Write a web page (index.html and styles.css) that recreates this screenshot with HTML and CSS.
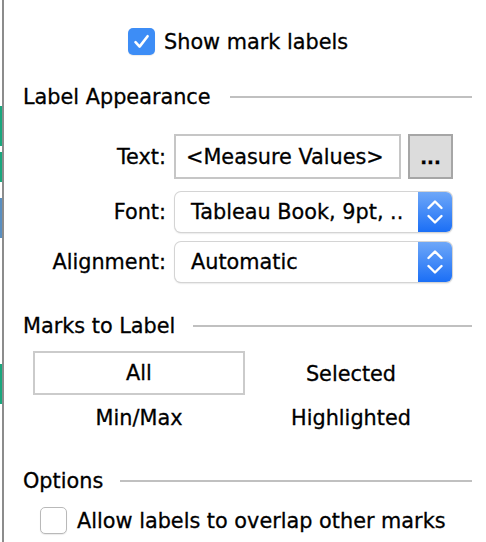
FILE: index.html
```html
<!DOCTYPE html>
<html>
<head>
<meta charset="utf-8">
<link rel="stylesheet" href="styles.css">
</head>
<body>
<div class="page">
  <div class="edge">
    <div class="marks">
      <div class="mk green m1"></div>
      <div class="mk green m2"></div>
      <div class="mk blue m3"></div>
      <div class="mk green m4"></div>
    </div>
    <div class="rule"></div>
  </div>
  <div class="panel">
    <div class="show-row">
      <span class="cb checked">
        <svg width="27" height="27" viewBox="0 0 27 27"><path d="M7.5 14.2 L11.6 18.6 L19.6 8.2" fill="none" stroke="#fff" stroke-width="2.6" stroke-linecap="round" stroke-linejoin="round"/></svg>
      </span>
      <span class="show-text">Show mark labels</span>
    </div>

    <div class="heading h1"><span>Label Appearance</span><div class="line"></div></div>

    <div class="form">
      <div class="row r1">
        <div class="lbl">Text:</div>
        <div class="textbox">&lt;Measure Values&gt;</div>
        <div class="dots">...</div>
      </div>
      <div class="row r2">
        <div class="lbl">Font:</div>
        <div class="select"><span class="sel-text">Tableau Book, 9pt, ..</span>
          <span class="stepper"><svg width="20" height="30" viewBox="0 0 20 30"><path d="M3.5 11 L10 4.5 L16.5 11 M3.5 19 L10 25.5 L16.5 19" fill="none" stroke="#fff" stroke-width="2.4" stroke-linecap="round" stroke-linejoin="round"/></svg></span>
        </div>
      </div>
      <div class="row r3">
        <div class="lbl">Alignment:</div>
        <div class="select"><span class="sel-text">Automatic</span>
          <span class="stepper"><svg width="20" height="30" viewBox="0 0 20 30"><path d="M3.5 11 L10 4.5 L16.5 11 M3.5 19 L10 25.5 L16.5 19" fill="none" stroke="#fff" stroke-width="2.4" stroke-linecap="round" stroke-linejoin="round"/></svg></span>
        </div>
      </div>
    </div>

    <div class="heading h2"><span>Marks to Label</span><div class="line"></div></div>

    <div class="choices">
      <div class="choice sel">All</div>
      <div class="choice">Selected</div>
      <div class="choice">Min/Max</div>
      <div class="choice">Highlighted</div>
    </div>

    <div class="heading h3"><span>Options</span><div class="line"></div></div>

    <div class="opt-row">
      <span class="cb"></span>
      <span class="opt-text">Allow labels to overlap other marks</span>
    </div>
  </div>
</div>
</body>
</html>
```

FILE: styles.css
```css
html, body {
  margin: 0;
  padding: 0;
  background: #fff;
}
body {
  font-family: "DejaVu Sans", Verdana, sans-serif;
  font-size: 20.8px;
  color: #000;
  -webkit-text-stroke: 0.3px #000;
}
.page {
  width: 486px;
  height: 542px;
  overflow: hidden;
  display: flex;
}
.edge {
  width: 4px;
  display: flex;
  flex-shrink: 0;
}
.marks {
  width: 2px;
  display: flex;
  flex-direction: column;
}
.mk { width: 2px; }
.green { background: #1aa77d; }
.blue { background: #5a8fc0; }
.m1 { margin-top: 106px; height: 40px; }
.m2 { margin-top: 6px; height: 30px; }
.m3 { margin-top: 16px; height: 40px; }
.m4 { margin-top: 126px; height: 40px; }
.rule {
  width: 2px;
  background: #8c8c8c;
}
.panel {
  flex: 1;
  display: flex;
  flex-direction: column;
}
.show-row {
  margin-top: 28px;
  height: 27px;
  display: flex;
  align-items: center;
  padding-left: 124px;
  gap: 9px;
}
.cb {
  width: 27px;
  height: 27px;
  box-sizing: border-box;
  border-radius: 5px;
  display: inline-block;
  flex-shrink: 0;
  border: 1.5px solid #b9b9b9;
  background: #fff;
  box-shadow: 0 1px 1px rgba(0,0,0,0.08);
}
.cb.checked {
  border: none;
  background: #3d8df6;
}
.cb svg { display: block; }
.heading {
  display: flex;
  align-items: center;
  padding-left: 19px;
  padding-right: 14px;
  height: 24px;
}
.heading .line {
  flex: 1;
  height: 2px;
  background: #c0c0c0;
  margin-left: 19px;
}
.h1 { margin-top: 30px; }
.h2 { margin-top: 32px; }
.h3 { margin-top: 30px; }
.h3 .line { margin-left: 17px; }
.h2 .line { margin-left: 18px; }
.form {
  margin-top: 25px;
  display: flex;
  flex-direction: column;
}
.row {
  display: flex;
  align-items: center;
}
.r1 { height: 45px; }
.r2 { height: 40px; margin-top: 13px; }
.r3 { height: 40px; margin-top: 10px; }
.lbl {
  width: 170px;
  box-sizing: border-box;
  text-align: right;
  padding-right: 8px;
}
.textbox {
  width: 227px;
  height: 45px;
  box-sizing: border-box;
  border: 2px solid #c6c6c6;
  padding-left: 10px;
  display: flex;
  align-items: center;
}
.dots {
  margin-left: 7px;
  width: 45px;
  height: 45px;
  box-sizing: border-box;
  border: 2px solid #a6a6a6;
  background: #dcdcdc;
  display: flex;
  align-items: center;
  justify-content: center;
  padding-top: 2px;
  font-weight: bold;
  font-size: 18px;
}
.select {
  margin-left: 1px;
  width: 277px;
  height: 40px;
  box-sizing: border-box;
  border-radius: 6px;
  background: #fff;
  box-shadow: 0 0 0 1px #d4d4d4, 0 1px 2px rgba(0,0,0,0.25);
  display: flex;
  align-items: center;
  overflow: hidden;
}
.sel-text {
  flex: 1;
  padding-left: 16px;
  white-space: nowrap;
}
.stepper {
  width: 34px;
  height: 40px;
  background: linear-gradient(#6ea7f8, #1b6ff6);
  display: flex;
  align-items: center;
  justify-content: center;
}
.stepper svg { display: block; }
.choices {
  margin-top: 13px;
  display: grid;
  grid-template-columns: 212px 212px;
  grid-template-rows: 44px 44px;
  padding-left: 29px;
}
.choice {
  display: flex;
  align-items: center;
  justify-content: center;
  box-sizing: border-box;
  padding-top: 2px;
}
.choice.sel {
  border: 2px solid #cbcbcb;
  padding-top: 0;
}
.opt-row {
  margin-top: 14px;
  padding-left: 36px;
  display: flex;
  align-items: center;
  gap: 10px;
  height: 27px;
}
.opt-text { white-space: nowrap; }
```
